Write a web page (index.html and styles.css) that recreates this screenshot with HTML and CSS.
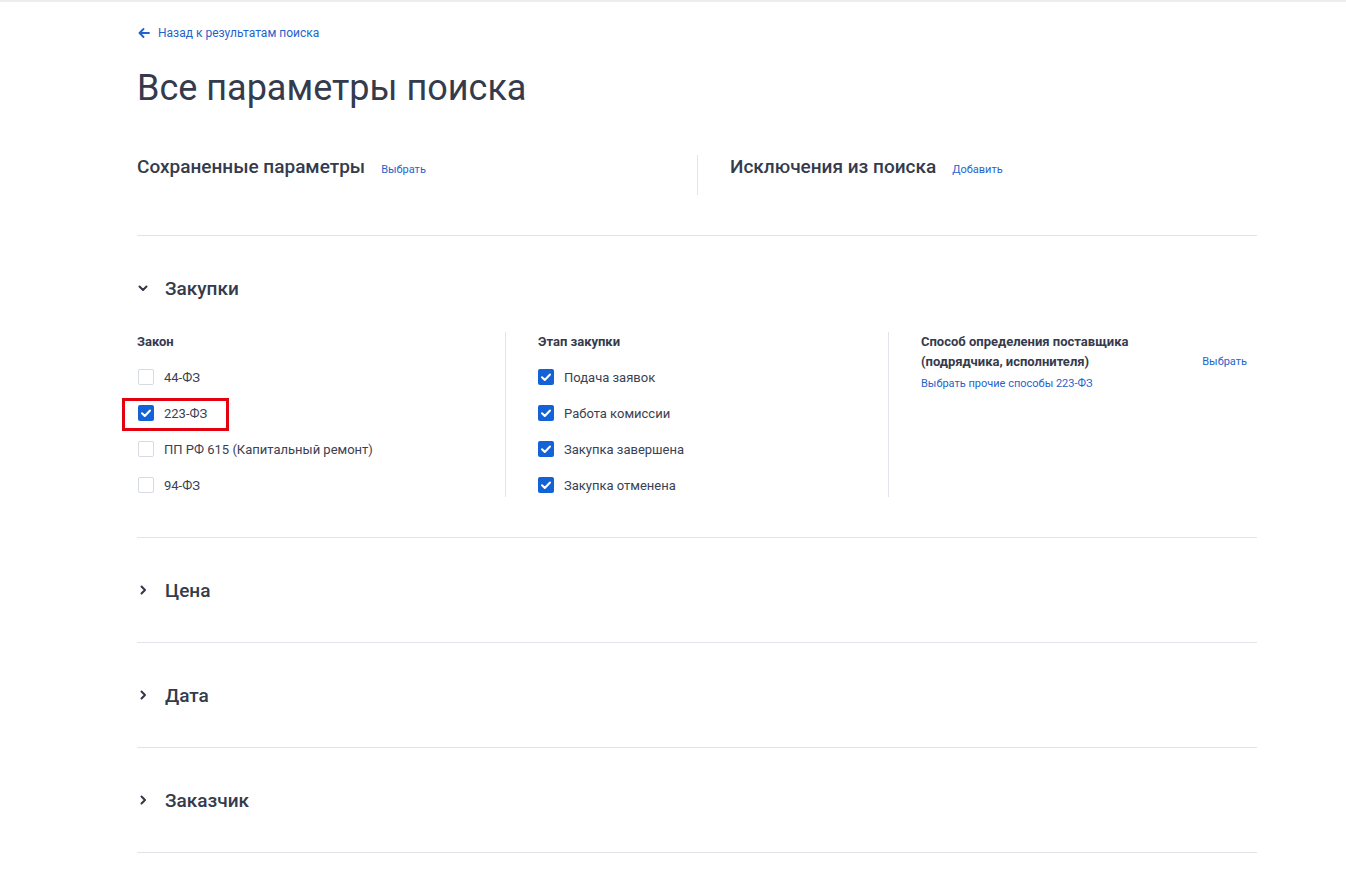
FILE: index.html
```html
<!DOCTYPE html>
<html lang="ru">
<head>
<meta charset="utf-8">
<title>Все параметры поиска</title>
<link rel="stylesheet" href="styles.css">
</head>
<body>
<div class="page">
  <a class="back" href="#">
    <svg class="back-icon" width="12" height="10" viewBox="0 0 12 10"><path d="M11 5H1.8M5.5 1L1.5 5L5.5 9" fill="none" stroke="#1f63cc" stroke-width="1.8" stroke-linecap="round" stroke-linejoin="round"/></svg>
    <span>Назад к результатам поиска</span>
  </a>
  <h1 class="title">Все параметры поиска</h1>

  <div class="top-row">
    <div class="top-cell">
      <span class="top-title">Сохраненные параметры</span>
      <a class="small-link" href="#">Выбрать</a>
    </div>
    <div class="top-cell top-cell-right">
      <span class="top-title">Исключения из поиска</span>
      <a class="small-link" href="#">Добавить</a>
    </div>
  </div>

  <section class="section">
    <div class="section-head">
      <svg class="chev" width="12" height="12" viewBox="0 0 12 12"><path d="M2.5 4.5L6 8L9.5 4.5" fill="none" stroke="#2f3647" stroke-width="2" stroke-linecap="round" stroke-linejoin="round"/></svg>
      <span>Закупки</span>
    </div>
    <div class="cols">
      <div class="col col-first">
        <div class="col-label">Закон</div>
        <div class="checks">
          <label class="check"><span class="box"></span><span>44-ФЗ</span></label>
          <label class="check highlighted"><span class="box on"><svg width="16" height="16" viewBox="0 0 16 16"><path d="M4 8.2L6.8 11L12 5.5" fill="none" stroke="#fff" stroke-width="2" stroke-linecap="round" stroke-linejoin="round"/></svg></span><span>223-ФЗ</span><span class="mark"></span></label>
          <label class="check"><span class="box"></span><span>ПП РФ 615 (Капитальный ремонт)</span></label>
          <label class="check"><span class="box"></span><span>94-ФЗ</span></label>
        </div>
      </div>
      <div class="col col-bordered">
        <div class="col-label">Этап закупки</div>
        <div class="checks">
          <label class="check"><span class="box on"><svg width="16" height="16" viewBox="0 0 16 16"><path d="M4 8.2L6.8 11L12 5.5" fill="none" stroke="#fff" stroke-width="2" stroke-linecap="round" stroke-linejoin="round"/></svg></span><span>Подача заявок</span></label>
          <label class="check"><span class="box on"><svg width="16" height="16" viewBox="0 0 16 16"><path d="M4 8.2L6.8 11L12 5.5" fill="none" stroke="#fff" stroke-width="2" stroke-linecap="round" stroke-linejoin="round"/></svg></span><span>Работа комиссии</span></label>
          <label class="check"><span class="box on"><svg width="16" height="16" viewBox="0 0 16 16"><path d="M4 8.2L6.8 11L12 5.5" fill="none" stroke="#fff" stroke-width="2" stroke-linecap="round" stroke-linejoin="round"/></svg></span><span>Закупка завершена</span></label>
          <label class="check"><span class="box on"><svg width="16" height="16" viewBox="0 0 16 16"><path d="M4 8.2L6.8 11L12 5.5" fill="none" stroke="#fff" stroke-width="2" stroke-linecap="round" stroke-linejoin="round"/></svg></span><span>Закупка отменена</span></label>
        </div>
      </div>
      <div class="col col-bordered col-last">
        <div class="method-head">
          <div class="col-label method-label">Способ определения поставщика (подрядчика, исполнителя)</div>
          <a class="small-link method-link" href="#">Выбрать</a>
        </div>
        <a class="small-link other-link" href="#">Выбрать прочие способы 223-ФЗ</a>
      </div>
    </div>
  </section>

  <section class="section">
    <div class="section-head">
      <svg class="chev" width="12" height="12" viewBox="0 0 12 12"><path d="M4.5 2.5L8 6L4.5 9.5" fill="none" stroke="#2f3647" stroke-width="2" stroke-linecap="round" stroke-linejoin="round"/></svg>
      <span>Цена</span>
    </div>
  </section>
  <section class="section">
    <div class="section-head">
      <svg class="chev" width="12" height="12" viewBox="0 0 12 12"><path d="M4.5 2.5L8 6L4.5 9.5" fill="none" stroke="#2f3647" stroke-width="2" stroke-linecap="round" stroke-linejoin="round"/></svg>
      <span>Дата</span>
    </div>
  </section>
  <section class="section">
    <div class="section-head">
      <svg class="chev" width="12" height="12" viewBox="0 0 12 12"><path d="M4.5 2.5L8 6L4.5 9.5" fill="none" stroke="#2f3647" stroke-width="2" stroke-linecap="round" stroke-linejoin="round"/></svg>
      <span>Заказчик</span>
    </div>
  </section>
</div>
</body>
</html>
```

FILE: styles.css
```css
html, body {
  margin: 0;
  padding: 0;
  background: #ffffff;
}

body {
  border-top: 2px solid #ececec;
  font-family: Roboto, "Liberation Sans", Arial, sans-serif;
  color: #343b4d;
}

.page {
  width: 1120px;
  margin-left: 137px;
  padding-top: 23px;
}

a {
  text-decoration: none;
}

.back {
  display: flex;
  align-items: center;
  gap: 8px;
  height: 16px;
  font-size: 12px;
  color: #1f63cc;
  width: max-content;
}

.back-icon {
  display: block;
  margin-left: 1px;
}

.title {
  margin: 25px 0 0;
  font-size: 36px;
  line-height: 44px;
  font-weight: 400;
  color: #343b4d;
}

.top-row {
  display: grid;
  grid-template-columns: 560px 560px;
  margin-top: 45px;
  padding-bottom: 40px;
  border-bottom: 1px solid #e1e5ea;
}

.top-cell {
  display: flex;
  align-items: baseline;
  gap: 16px;
  height: 40px;
}

.top-cell-right {
  border-left: 1px solid #e1e5ea;
  padding-left: 32px;
}

.top-title {
  font-size: 19px;
  line-height: 24px;
  font-weight: 500;
  color: #343b4d;
}

.small-link {
  font-size: 11px;
  line-height: 16px;
  color: #1f63cc;
}

.section {
  border-bottom: 1px solid #e1e5ea;
  padding: 40px 0;
}

.section-head {
  display: flex;
  align-items: center;
  gap: 16px;
  height: 24px;
  font-size: 19px;
  font-weight: 500;
  color: #343b4d;
}

.chev {
  display: block;
}

.cols {
  display: grid;
  grid-template-columns: 368px 383px 1fr;
  margin-top: 32px;
}

.col {
  padding-bottom: 4px;
}

.col-first {
  padding-left: 1px;
}

.col-bordered {
  border-left: 1px solid #e1e5ea;
  padding-left: 32px;
}

.col-last {
  padding-right: 10px;
}

.col-label {
  font-size: 13px;
  line-height: 20px;
  font-weight: 700;
  color: #343b4d;
}

.col-first .col-label {
  margin-left: -1px;
}

.checks {
  display: flex;
  flex-direction: column;
  gap: 20px;
  margin-top: 17px;
}

.check {
  position: relative;
  display: flex;
  align-items: center;
  gap: 10px;
  height: 16px;
  font-size: 13px;
  color: #3a4152;
  width: max-content;
}

.box {
  box-sizing: border-box;
  width: 16px;
  height: 16px;
  border: 1px solid #d6dbe2;
  border-radius: 2px;
  background: #fff;
  flex: none;
}

.box.on {
  border: none;
  background: #1463d6;
}

.box svg {
  display: block;
}

.mark {
  position: absolute;
  left: -16px;
  top: -7px;
  width: 107px;
  height: 33px;
  box-sizing: border-box;
  border: 3px solid #e3000f;
}

.method-head {
  display: flex;
  justify-content: space-between;
  align-items: flex-end;
}

.method-label {
  width: 220px;
}

.method-link {
  line-height: 20px;
}

.other-link {
  display: block;
  margin-top: 4px;
}
```
